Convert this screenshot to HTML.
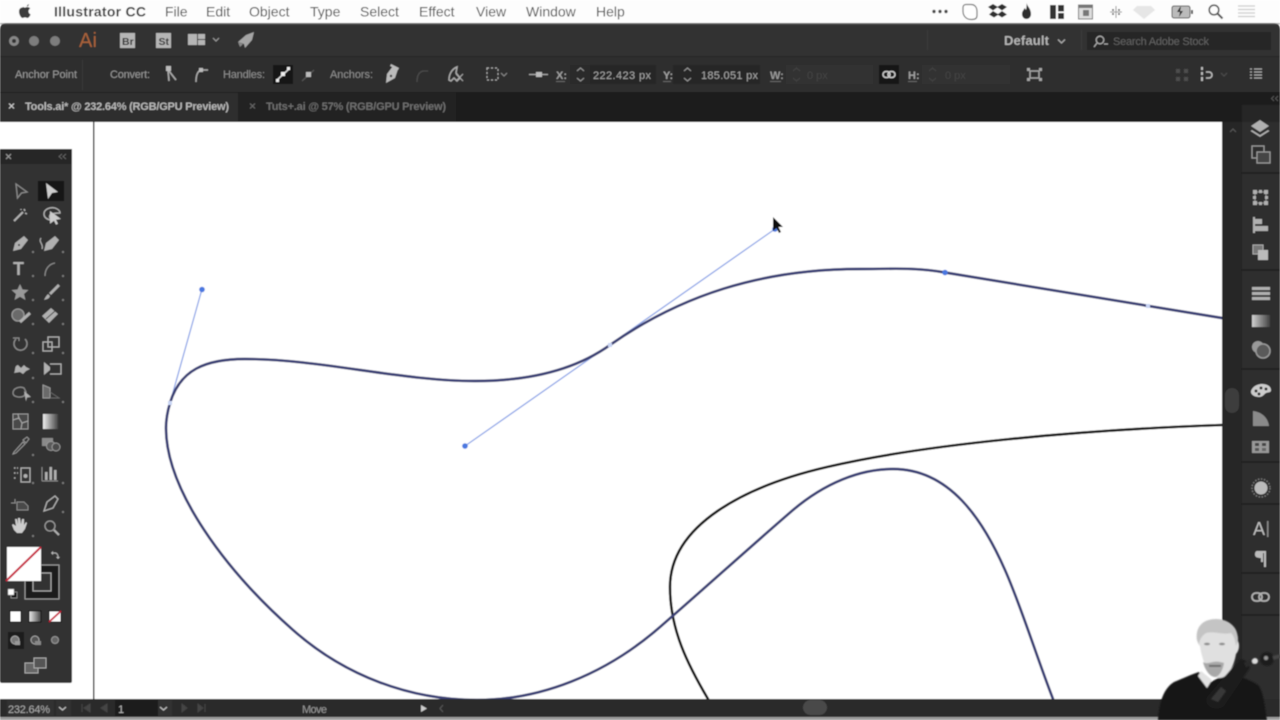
<!DOCTYPE html>
<html><head><meta charset="utf-8"><title>Illustrator CC</title>
<style>
html,body{margin:0;padding:0;background:#fff;width:1280px;height:720px;overflow:hidden}
svg{display:block;position:absolute;left:0;top:0}
text{font-family:"Liberation Sans",sans-serif}
</style></head><body>
<svg width="1280" height="720" viewBox="0 0 1280 720" xmlns="http://www.w3.org/2000/svg">
<defs>
<linearGradient id="g" x1="0" x2="1"><stop offset="0" stop-color="#eee"/><stop offset="1" stop-color="#444"/></linearGradient>
<filter id="b" x="-5%" y="-5%" width="110%" height="110%"><feGaussianBlur stdDeviation="0.6"/></filter>
<filter id="b2" x="-20%" y="-20%" width="140%" height="140%"><feGaussianBlur stdDeviation="0.9"/></filter>
</defs>
<g filter="url(#b)">
<!-- menu bar -->
<rect width="1280" height="24" fill="#fdfdfd"/>
<path d="M27 6.500c.8-.1 1.800-.9 2-2.300-1.200.1-2.300 1.100-2 2.300zM22.500 7.500c-2 0-3.500 1.600-3.500 4 0 3 2 6.500 3.600 6.500.9 0 1.300-.6 2.400-.6s1.500.6 2.400.6c1.400 0 2.600-2 3.200-3.600-2.600-1-2.800-4.800-.3-5.900-.8-1-2-1.500-3-1.500-1 0-1.700.6-2.300.6-.7 0-1.500-.6-2.500-.6z" fill="#3a3a3a"/>
<text x="54" y="16.500" font-size="14" font-weight="700" fill="#3c3c3c" textLength="92">Illustrator CC</text>
<g font-size="14" fill="#505050">
<text x="165" y="16.500">File</text><text x="206" y="16.500">Edit</text><text x="249" y="16.500">Object</text><text x="310" y="16.500">Type</text><text x="360" y="16.500">Select</text><text x="419" y="16.500">Effect</text><text x="476" y="16.500">View</text><text x="526" y="16.500">Window</text><text x="596" y="16.500">Help</text>
</g>
<!-- status icons -->
<g fill="#444">
<circle cx="934" cy="11.500" r="1.700"/><circle cx="940" cy="11.500" r="1.700"/><circle cx="946" cy="11.500" r="1.700"/>
<path d="M966 4.500h5c4 0 6 3 6 7v4c0 3-2 4-5 4h-1c-5 0-8-4-8-8v-4c0-2 1.500-3 3-3z" fill="#fff" stroke="#777" stroke-width="1.200"/>
<path d="M993 4l5 3-5 3.500-5-3.500zM1002 4l5 3-5 3.500-5-3.500zM993 11l5 3 4-3 5 3.500-5 3-4-2.500-4 2.500-5-3z" fill="#2e2e2e"/>
<path d="M1026.500 3c.5 3 4.500 5.500 4.500 11 0 3-2 5-4.500 5s-4.500-2-4.500-5c0-3 2-4 2.500-6 1 1 1.500 2 1.500 2 .6-2 .5-4.500.5-7z" fill="#2e2e2e"/>
<rect x="1050" y="5" width="6" height="14" fill="#333"/><rect x="1058" y="5" width="6" height="6.500" fill="#333"/><rect x="1058" y="13" width="6" height="6" fill="#333"/>
<rect x="1078.500" y="5" width="14" height="14" fill="#ddd" stroke="#777"/><rect x="1078.500" y="5" width="14" height="3" fill="#777"/><rect x="1083" y="10" width="6" height="6" fill="#777"/>
<path d="M1116 6v12M1110 12h12" stroke="#999" stroke-width="1" fill="none"/><circle cx="1113" cy="10" r="1" fill="#555"/><circle cx="1119" cy="10" r="1" fill="#555"/><circle cx="1113" cy="14" r="1" fill="#555"/><circle cx="1119" cy="14" r="1" fill="#555"/>
<path d="M1137 6h14l4 4-11 9-11-9z" fill="#e6e6e6"/>
<rect x="1172" y="6" width="18" height="12" rx="2" fill="#bbb" stroke="#555"/><rect x="1191" y="10" width="2" height="4" fill="#555"/><path d="M1180 7l-3 5h3l-1 5 4-6h-3l1-4z" fill="#222"/>
<circle cx="1214" cy="10" r="4.800" fill="none" stroke="#555" stroke-width="1.600"/><path d="M1217.500 13.500l5 5" stroke="#555" stroke-width="2"/>
<path d="M1238 6h17M1238 9.500h17M1238 13h17M1238 16.500h17" stroke="#ccc" stroke-width="1.300"/>
</g>
<!-- app bar -->
<path d="M0 30q0-7 7-7H1273q7 0 7 7V130H0z" fill="#323232"/>
<rect y="23" width="1280" height="1.500" fill="#777" opacity=".6"/>
<circle cx="14" cy="41" r="5" fill="#888"/><circle cx="14" cy="41" r="2" fill="#333"/><circle cx="34" cy="41" r="5" fill="#7d7d7d"/><circle cx="55" cy="41" r="5" fill="#7d7d7d"/>
<text x="79" y="47" font-size="20" fill="#a8623a" textLength="18">Ai</text>
<rect x="120" y="33" width="15" height="15" fill="#b5b5b5"/><text x="122" y="45" font-size="10.500" font-weight="700" fill="#333">Br</text>
<rect x="156" y="33" width="15" height="15" fill="#b5b5b5"/><text x="158.500" y="45" font-size="10.500" font-weight="700" fill="#333">St</text>
<rect x="188" y="34" width="9" height="11" fill="#b5b5b5"/><rect x="198" y="34" width="7" height="5" fill="#b5b5b5"/><rect x="198" y="40" width="7" height="5" fill="#b5b5b5"/>
<path d="M213 38l3 3 3-3" stroke="#999" stroke-width="1.200" fill="none"/>
<path d="M254 32l-2 8-7 8-1-4-6-2 8-7z" fill="#a5a5a5"/><path d="M238 42l5 2-3 3z" fill="#888"/>
<rect x="927" y="30" width="1" height="20" fill="#3d3d3d"/><rect x="1081" y="30" width="1" height="20" fill="#3d3d3d"/>
<text x="1004" y="45" font-size="13" font-weight="700" fill="#b5b5b5" textLength="45">Default</text>
<path d="M1058 39.500l3.500 3.500 3.500-3.500" stroke="#aaa" stroke-width="1.300" fill="none"/>
<rect x="1087" y="32" width="184" height="18" fill="#252525"/>
<circle cx="1100" cy="40" r="3.800" fill="none" stroke="#aaa" stroke-width="1.300"/><path d="M1097 43l-3 4M1104 44l4 0" stroke="#aaa" stroke-width="1.300"/>
<text x="1113" y="45" font-size="11" fill="#636363" textLength="96">Search Adobe Stock</text>
<!-- control bar -->
<rect y="57" width="1280" height="35" fill="#2e2e2e"/>
<rect y="56" width="1280" height="1" fill="#262626"/>
<rect x="82" y="60" width="1" height="30" fill="#383838"/>
<g font-size="11" fill="#9a9a9a">
<text x="15" y="78" textLength="62">Anchor Point</text>
<text x="110" y="78" textLength="40">Convert:</text>
<text x="223" y="78" textLength="42" fill="#8e8e8e">Handles:</text>
<text x="330" y="78" textLength="43" fill="#8e8e8e">Anchors:</text>
</g>
<path d="M168 70l1 11M169 71l7 9" stroke="#aaa" stroke-width="1.600" fill="none"/><rect x="166" y="66" width="5" height="5" fill="#bbb"/>
<path d="M196 82c0-7 2-11 5-12h7" stroke="#aaa" stroke-width="1.500" fill="none"/><rect x="199" y="68" width="4" height="4" fill="#bbb"/>
<rect x="273" y="65" width="20" height="19" fill="#171717"/>
<path d="M277 80l12-11" stroke="#ddd" stroke-width="1.500"/><rect x="281" y="72" width="4" height="4" fill="#eee"/><rect x="276" y="79" width="3" height="3" fill="#eee"/><rect x="287" y="67" width="3" height="3" fill="#eee"/>
<path d="M302 81l12-11" stroke="#555" stroke-width="1.200"/><rect x="306" y="72" width="5" height="5" fill="#bbb"/>
<path d="M393 66l5 3-3 9-9 5 1-9zM391 64l8 4-1 2-8-4z" fill="#bbb"/><circle cx="391" cy="76" r="1.200" fill="#333"/>
<path d="M417 82c0-6 2-10 6-11h5" stroke="#4c4c4c" stroke-width="1.300" fill="none"/>
<path d="M449 80c0-6 3-11 8-13l-1 6 4 5-3 3-3-3-3 3z" fill="none" stroke="#aaa" stroke-width="1.500"/><path d="M456 74l7 7M463 74l-7 7" stroke="#aaa" stroke-width="1"/>
<rect x="487" y="68" width="11" height="12" fill="none" stroke="#aaa" stroke-width="1.200" stroke-dasharray="2 2"/>
<path d="M501 73l3 3 3-3" stroke="#888" stroke-width="1.100" fill="none"/>
<path d="M529 74.500h19" stroke="#aaa" stroke-width="1.300"/><rect x="536" y="72" width="6" height="5" fill="#bbb"/>
<text x="556" y="79" font-size="11" font-weight="700" fill="#a0a0a0">X:</text><rect x="556" y="81" width="9" height="1" fill="#666"/>
<rect x="570" y="65" width="86" height="19" fill="#262626"/><rect x="570" y="65" width="20" height="19" fill="#2a2a2a"/>
<path d="M577 71l3.500-3 3.500 3M577 78l3.500 3 3.500-3" stroke="#999" stroke-width="1.100" fill="none"/>
<text x="593" y="79" font-size="11" fill="#a8a8a8" textLength="58">222.423 px</text>
<text x="663" y="79" font-size="11" font-weight="700" fill="#a0a0a0">Y:</text><rect x="663" y="81" width="8" height="1" fill="#666"/>
<rect x="673" y="65" width="87" height="19" fill="#262626"/>
<path d="M684 71l3.500-3 3.500 3M684 78l3.500 3 3.500-3" stroke="#999" stroke-width="1.100" fill="none"/>
<text x="701" y="79" font-size="11" fill="#a8a8a8" textLength="57">185.051 px</text>
<text x="770" y="79" font-size="11" font-weight="700" fill="#9a9a9a">W:</text><rect x="770" y="81" width="11" height="1" fill="#666"/>
<rect x="786" y="65" width="87" height="19" fill="#333"/>
<path d="M793 71l3.500-3 3.500 3M793 78l3.500 3 3.500-3" stroke="#444" stroke-width="1.100" fill="none"/>
<text x="807" y="79" font-size="11" fill="#444">0 px</text>
<rect x="879" y="65" width="20" height="19" fill="#191919"/>
<rect x="883" y="71.500" width="7" height="6" rx="3" fill="none" stroke="#ccc" stroke-width="1.500"/><rect x="888" y="71.500" width="7" height="6" rx="3" fill="none" stroke="#ccc" stroke-width="1.500"/>
<text x="908" y="79" font-size="11" font-weight="700" fill="#a0a0a0">H:</text><rect x="908" y="81" width="9" height="1" fill="#666"/>
<rect x="922" y="65" width="88" height="19" fill="#333"/>
<path d="M929 71l3.500-3 3.500 3M929 78l3.500 3 3.500-3" stroke="#444" stroke-width="1.100" fill="none"/>
<text x="945" y="79" font-size="11" fill="#444">0 px</text>
<g fill="#a5a5a5"><rect x="1027" y="68" width="3" height="3"/><rect x="1039" y="68" width="3" height="3"/><rect x="1027" y="78" width="3" height="3"/><rect x="1039" y="78" width="3" height="3"/></g>
<rect x="1030" y="71" width="9" height="7" fill="none" stroke="#a5a5a5" stroke-width="1.500"/>
<g fill="#4e4e4e"><rect x="1176" y="69" width="4" height="4"/><rect x="1184" y="69" width="4" height="4"/><rect x="1176" y="77" width="4" height="4"/><rect x="1184" y="77" width="4" height="4"/></g>
<path d="M1202 67v3M1202 72v3M1202 77v4" stroke="#bbb" stroke-width="2"/><path d="M1206 72h3a3 3 0 0 1 0 6h-3" stroke="#bbb" stroke-width="1.500" fill="none"/>
<path d="M1221 73l3 3 3-3" stroke="#4e4e4e" stroke-width="1.100" fill="none"/>
<path d="M1254 69h8M1254 72h8M1254 75h8M1254 78h8M1250 69h2M1250 72h2M1250 75h2M1250 78h2" stroke="#aaa" stroke-width="1.200"/>
<!-- tabs -->
<rect y="92" width="1280" height="30" fill="#1e1e1e"/>
<rect y="93" width="238" height="29" fill="#2e2e2e"/>
<rect x="238" y="93" width="218" height="29" fill="#232323"/>
<path d="M9 103.500l5 5M14 103.500l-5 5" stroke="#ccc" stroke-width="1.200"/>
<text x="25" y="110" font-size="11" font-weight="700" fill="#b8b8b8" textLength="204">Tools.ai* @ 232.64% (RGB/GPU Preview)</text>
<path d="M250 103.500l5 5M255 103.500l-5 5" stroke="#666" stroke-width="1.200"/>
<text x="266" y="110" font-size="11" font-weight="700" fill="#6e6e6e" textLength="180">Tuts+.ai @ 57% (RGB/GPU Preview)</text>
<!-- canvas -->
<rect x="0" y="122" width="1222" height="577" fill="#fff"/>
<rect x="93" y="122" width="1.500" height="577" fill="#333"/>
<!-- artwork -->
<g fill="none" stroke-linecap="round">
<path d="M170 403L202 289M465 446L775 229M945 272.500L1148 306" stroke="#8ea6e8" stroke-width="1.300"/>
<path d="M1222 425C1080 430 925 444 827 467C745 486 670 525 670 587C670 630 688 665 708 699" stroke="#161616" stroke-width="2.600"/>
<path d="M1222 318L945 272.500C915 267 890 269 860 269C760 269 680 296 610 345C575 370 530 381 475 381C400 381 320 359 245 359C205 359 180 370 170 403C167 413 166 420 166 428C166 490 225 570 293 630C345 676 410 700 477 700C540 700 605 675 660 627C705 588 750 547 793 510C825 483 860 469 893 469C950 469 983 520 1005 570C1021 606 1037 658 1053 699" stroke="#3b4174" stroke-width="2.700"/>
</g>
<g fill="#4a78e0"><circle cx="202" cy="289.500" r="2.800"/><circle cx="465" cy="446" r="2.800"/><circle cx="775" cy="229" r="2.800"/><circle cx="945" cy="272.500" r="2.800"/></g>
<g fill="#c8d4f4"><rect x="168" y="401" width="4" height="4"/><rect x="608" y="343" width="4" height="4"/><rect x="1146" y="304" width="4" height="4"/></g>
<path d="M773 217v14l3.500-3 2.500 5 2-1-2.500-5h4.500z" fill="#111"/>
<!-- tools panel -->
<rect x="0" y="149" width="72" height="534" rx="2" fill="#303030"/>
<rect x="0" y="149" width="72" height="15" fill="#252525"/>
<path d="M6 154l5 5M11 154l-5 5" stroke="#999" stroke-width="1.200"/>
<path d="M62 154l-3 2.500 3 2.500M66 154l-3 2.500 3 2.500" stroke="#666" stroke-width="1" fill="none"/>
<rect x="38" y="181" width="26" height="20" fill="#181818"/>
<g fill="#b0b0b0" stroke="#b0b0b0">
<path d="M16 184l11 8-5.500 1-4 5z" fill="none" stroke="#8a8a8a" stroke-width="1.300"/>
<path d="M46 183l12 9-6 1-4 6z" stroke="none" fill="#ccc"/>
<path d="M14 221l9-9" stroke-width="2"/><path d="M24 209l1 2M27 214l-2-1M21 209l0 1" stroke-width="1.500"/>
<path d="M44 214c0-5 6-7 11-6 3 1 5 3 5 5-3 0-7 0-10 2-1 2 0 4 2 5-4 0-8-2-8-6z" fill="none" stroke-width="1.400"/><path d="M50 211l11 8-5 .8 2 4-2 1-2-4-4 3z" stroke="none" fill="#ccc"/>
<path d="M13 251l2-8 9-7 4 4-7 9z" stroke="none"/><circle cx="19" cy="245" r="1" fill="#333" stroke="none"/>
<path d="M44 251l2-8 9-7 4 4-7 9z" stroke="none"/><path d="M41 238c-3 4 3 6 1 11" fill="none" stroke-width="1.200"/>
<text x="13" y="275" font-size="18" font-weight="700" stroke="none" font-family="Liberation Serif">T</text>
<path d="M45 276c0-7 4-12 10-13" fill="none" stroke="#8a8a8a" stroke-width="1.300"/>
<path d="M20 284l2.500 5.500 6 .5-4.500 4 1.500 6-5.500-3.200-5.500 3.200 1.500-6-4.500-4 6-.5z" stroke="none" fill="#999"/>
<path d="M58 284l2 2-9 9-2-2zM48 294l2 2c-1 3-3 3-6 4 1-2 2-4 4-6z" stroke="none"/>
<circle cx="18" cy="315" r="6" fill="#6a6a6a" stroke="#999" stroke-width="1.300"/><path d="M20 322l10-9" stroke-width="3"/>
<path d="M42 316l9-8 7 6-9 9z" stroke="none"/><path d="M46 319l9-8" stroke="#444" stroke-width="1"/>
<path d="M25 339a6.500 6.500 0 1 1-9 0" fill="none" stroke="#8a8a8a" stroke-width="1.500"/><path d="M13 338h6v3" fill="none" stroke="#8a8a8a" stroke-width="1.200"/>
<rect x="43" y="342" width="9" height="9" fill="none" stroke-width="1.300"/><rect x="48" y="337" width="11" height="10" fill="none" stroke-width="1.300"/>
<path d="M14 373c2-3 0-7 4-8l3 3 3-3 2 2 4 2-4 2-3 3-3-2z" stroke="none"/>
<path d="M50 364h11v10H50" fill="none" stroke-width="1.300"/><path d="M44 362l6 5v3l-6 5z" stroke="none"/>
<path d="M13 393c0-5 7-7 11-5l2 4-2 4c-4 2-11 1-11-3z" fill="none" stroke="#8a8a8a" stroke-width="1.300"/><path d="M24 391l7 6-4 .5-1 4z" stroke="none"/>
<path d="M43 385l7 3v10h-7z" fill="#6a6a6a" stroke="#999" stroke-width="1"/><path d="M50 398h9l-9-6" fill="none" stroke="#666" stroke-width="1"/>
<rect x="13" y="414" width="15" height="15" fill="#4a4a4a" stroke="#999" stroke-width="1"/><path d="M13 420l6-2 3 5 6-2M18 414l1 5M22 423l-1 6" fill="none" stroke="#aaa" stroke-width="1"/>
<rect x="43" y="414" width="15" height="15" fill="url(#g)" stroke="none"/>
<path d="M14 452l-1 2 3-1 9-9-2-2zM23 440l4-3 2 2-3 4z" stroke="#999" stroke-width="1" fill="none"/>
<rect x="42" y="438" width="11" height="8" stroke="none" fill="#8a8a8a"/><circle cx="51" cy="446" r="4.500" fill="#5a5a5a" stroke="#999"/><circle cx="56" cy="447" r="4" fill="#4c4c4c" stroke="#999"/>
<rect x="21" y="468" width="9" height="14" fill="none" stroke-width="1.300"/><circle cx="25.500" cy="476" r="2" stroke="none"/><path d="M14 468h4M14 473h4M14 478h2" stroke-width="1.500" stroke-dasharray="1.500 1.500"/>
<path d="M42 481v-14M42 481h16" fill="none" stroke="#8a8a8a" stroke-width="1"/><rect x="45" y="472" width="2.500" height="8" stroke="none"/><rect x="49.500" y="467" width="2.500" height="13" stroke="none"/><rect x="54" y="470" width="2.500" height="10" stroke="none"/>
<path d="M11 503h5M15 499v4" fill="none" stroke="#8a8a8a" stroke-width="1"/><path d="M17 502h7l4 4v4H17z" fill="#4a4a4a" stroke="#8a8a8a"/>
<path d="M44 511l3-9 8-6 3 3-5 9z" fill="none" stroke-width="1.300"/>
<path d="M14 530l-2-5 1-1 3 2-1-7h2l1 5v-6h2l1 6 1-5h2l0 6 2-3 1 1-2 6-3 4h-5z" stroke="none" fill="#ccc"/>
<circle cx="50" cy="526" r="5" fill="none" stroke="#999" stroke-width="1.300"/><path d="M54 530l5 5" stroke-width="2"/>
</g>
<g fill="#777"><rect x="32" y="251" width="2" height="2"/><rect x="62" y="251" width="2" height="2"/><rect x="32" y="275" width="2" height="2"/><rect x="62" y="275" width="2" height="2"/><rect x="32" y="299" width="2" height="2"/><rect x="62" y="299" width="2" height="2"/><rect x="32" y="323" width="2" height="2"/><rect x="62" y="323" width="2" height="2"/><rect x="32" y="352" width="2" height="2"/><rect x="62" y="352" width="2" height="2"/><rect x="32" y="377" width="2" height="2"/><rect x="32" y="401" width="2" height="2"/><rect x="62" y="401" width="2" height="2"/><rect x="32" y="454" width="2" height="2"/><rect x="32" y="482" width="2" height="2"/><rect x="62" y="482" width="2" height="2"/><rect x="62" y="511" width="2" height="2"/><rect x="32" y="535" width="2" height="2"/></g>
<!-- fill/stroke -->
<rect x="25" y="565" width="34" height="34" fill="#1a1a1a" stroke="#999" stroke-width="1.200"/>
<rect x="33" y="573" width="18" height="18" fill="#333" stroke="#aaa" stroke-width="1.200"/>
<rect x="7" y="547" width="34" height="34" fill="#fff"/>
<path d="M6 581l35-34" stroke="#c8203a" stroke-width="2"/>
<path d="M52 553h3c2 0 3 2 3 4" stroke="#aaa" stroke-width="1.200" fill="none"/><path d="M51 553l2-2v4zM58 559l-2-2h4z" fill="#bbb"/>
<rect x="11" y="592" width="6" height="6" fill="#111" stroke="#999" stroke-width=".8"/><rect x="8" y="589" width="6" height="6" fill="#fff" stroke="#999" stroke-width=".5"/>
<rect x="10" y="611" width="11" height="11" fill="#fff" stroke="#111"/>
<rect x="29" y="611" width="12" height="11" fill="url(#g)" stroke="#111"/>
<rect x="49" y="611" width="12" height="11" fill="#fff" stroke="#111"/><path d="M49 622l12-11" stroke="#c8203a" stroke-width="1.800"/>
<rect x="8" y="632" width="16" height="17" fill="#1c1c1c"/>
<circle cx="15" cy="640" r="4" fill="#777" stroke="#aaa"/><rect x="15" y="641" width="5" height="4" fill="#999"/>
<circle cx="35" cy="640" r="4" fill="#555" stroke="#aaa"/><rect x="35" y="641" width="6" height="4" fill="#888"/>
<circle cx="55" cy="640" r="3.500" fill="#666" stroke="#999"/>
<rect x="25" y="663" width="13" height="10" fill="#666" stroke="#aaa"/><rect x="34" y="658" width="12" height="10" fill="#555" stroke="#aaa"/>
<!-- right dock -->
<rect x="1222" y="122" width="58" height="577" fill="#262626"/>
<rect x="1242" y="105" width="38" height="17" fill="#272727"/>
<rect x="1242" y="122" width="38" height="577" fill="#2f2f2f"/>
<rect x="1241" y="122" width="1" height="577" fill="#222"/>
<path d="M1230 132l3-3 3 3" stroke="#555" stroke-width="1.200" fill="none"/>
<path d="M1274 96l-2.500 2.500 2.500 2.500M1278 96l-2.500 2.500 2.500 2.500" stroke="#555" stroke-width="1" fill="none"/>
<rect x="1225" y="388" width="14" height="25" rx="7" fill="#3d3d3d"/>
<g fill="#242424"><rect x="1242" y="172" width="38" height="2"/><rect x="1242" y="269" width="38" height="2"/><rect x="1242" y="368" width="38" height="2"/><rect x="1242" y="461" width="38" height="2"/><rect x="1242" y="503" width="38" height="2"/><rect x="1242" y="572" width="38" height="2"/><rect x="1242" y="614" width="38" height="2"/></g>
<g fill="#b0b0b0">
<path d="M1260 120l9 6-9 6-9-6z"/><path d="M1252 130l8 5 8-5 1.500 1-9.500 6-9.500-6z"/>
<rect x="1252" y="146" width="12" height="12" fill="none" stroke="#999" stroke-width="1.300"/><rect x="1257" y="152" width="13" height="11" fill="#444" stroke="#999" stroke-width="1.300"/>
<rect x="1255" y="192" width="11" height="11" fill="none" stroke="#888"/><rect x="1253" y="190" width="4" height="4"/><rect x="1259" y="190" width="3" height="3"/><rect x="1264" y="190" width="4" height="4"/><rect x="1253" y="196" width="3" height="3"/><rect x="1265" y="196" width="3" height="3"/><rect x="1253" y="201" width="4" height="4"/><rect x="1259" y="202" width="3" height="3"/><rect x="1264" y="201" width="4" height="4"/>
<rect x="1253" y="217" width="2" height="16"/><rect x="1255" y="219" width="7" height="5"/><rect x="1255" y="226" width="13" height="5"/>
<rect x="1253" y="245" width="10" height="9" fill="#777" stroke="#aaa"/><rect x="1258" y="250" width="10" height="10" fill="#bbb"/>
<rect x="1252" y="287" width="18" height="3"/><rect x="1252" y="292" width="18" height="3"/><rect x="1252" y="297" width="18" height="3"/>
<rect x="1252" y="315" width="18" height="12" fill="url(#g)" opacity=".85"/>
<circle cx="1258" cy="347" r="6" fill="#999"/><circle cx="1263" cy="351" r="7" fill="#5a5a5a" stroke="#999" stroke-width="1.500"/>
<path d="M1262 384c6 0 9 3 9 6s-3 2-5 3-3 4-7 4-8-2-8-5 4-8 11-8z" fill="#ccc"/><circle cx="1256" cy="391" r="1.500" fill="#333"/><circle cx="1261" cy="388" r="1.500" fill="#333"/><circle cx="1266" cy="389" r="1.500" fill="#333"/><circle cx="1259" cy="394" r="1.500" fill="#333"/>
<path d="M1253 411c9 1 15 7 16 15h-16z" fill="#8a8a8a"/>
<rect x="1252" y="441" width="17" height="12" fill="#999"/><rect x="1255" y="443" width="4" height="3" fill="#444"/><rect x="1262" y="443" width="4" height="3" fill="#444"/><rect x="1255" y="448" width="4" height="3" fill="#555"/><rect x="1262" y="448" width="4" height="3" fill="#666"/>
<circle cx="1261" cy="488" r="6.500" fill="#bbb"/><circle cx="1261" cy="488" r="9" fill="none" stroke="#777" stroke-width="1.500" stroke-dasharray="1.500 1.500"/>
<text x="1253" y="535" font-size="18" fill="#bbb">A</text><rect x="1267" y="521" width="1.500" height="16" fill="#888"/>
<path d="M1257 551h9v16h-2v-14h-1v9h-2v-4c-4 0-6-1-6-3.500s1-3.500 2-3.500z" fill="#bbb"/>
<rect x="1252" y="593" width="10" height="8" rx="4" fill="none" stroke="#b0b0b0" stroke-width="1.800"/><rect x="1259" y="593" width="10" height="8" rx="4" fill="none" stroke="#b0b0b0" stroke-width="1.800"/>
</g>
<!-- status bar -->
<rect y="699" width="1280" height="18" fill="#2a2a2a"/>
<rect y="717" width="1280" height="3" fill="#9c9c9c"/>
<rect x="7" y="700" width="47" height="16" fill="#333"/>
<text x="8" y="713" font-size="11" fill="#aaa" textLength="42">232.64%</text>
<rect x="56" y="700" width="15" height="16" fill="#333"/><path d="M59 707l3.500 3 3.500-3" stroke="#bbb" stroke-width="1.300" fill="none"/>
<path d="M82 704v8M90 704l-6 4 6 4zM107 704l-6 4 6 4z" fill="#444" stroke="#444"/>
<rect x="115" y="700" width="43" height="16" fill="#1e1e1e"/>
<text x="118" y="713" font-size="11" fill="#bbb">1</text>
<rect x="158" y="700" width="14" height="16" fill="#333"/><path d="M160 707l3.500 3 3.500-3" stroke="#bbb" stroke-width="1.300" fill="none"/>
<path d="M182 704l5 4-5 4zM198 704l5 4-5 4zM205 704v8" fill="#444" stroke="#444"/>
<text x="302" y="713" font-size="11" fill="#999" textLength="25">Move</text>
<path d="M421 705l6 3.500-6 3.500z" fill="#ccc"/><path d="M443 705l-3 3.500 3 3.500" stroke="#555" stroke-width="1.200" fill="none"/>
<rect x="803" y="700" width="24" height="15" rx="7.500" fill="#484848"/>
</g>
<!-- webcam person -->
<g filter="url(#b2)">
<path d="M1158 720c1-18 6-32 16-38 10-4 18-8 25-10l12 10 18-10c10 5 24 8 30 14 5 8 6 22 8 34z" fill="#131313"/>
<path d="M1198 676l3-5 11 9-5 8z" fill="#e2e2e2"/>
<path d="M1197 634c-1 3 0 10 3 12 2 14 8 30 18 32 10 1 16-12 18-24 3-3 4-9 2-13 0-13-6-20-20-20-12 0-20 5-21 13z" fill="#e0e0e0"/>
<path d="M1197 640c-2-14 7-21 19-21 13 0 22 8 22 22l-2 5c-1-7-2-10-5-13-8 2-17-2-25 0-3 2-6 5-7 11z" fill="#c4c4c4"/>
<path d="M1203 662c3 2 6 1 10 0s8 0 11 1c-1 7-5 14-9 14-5 0-10-7-12-15z" fill="#a8a8a8"/>
<ellipse cx="1207" cy="644" rx="3" ry="1.300" fill="#888"/><ellipse cx="1222" cy="644" rx="3" ry="1.300" fill="#888"/>
<rect x="1209" y="665" width="12" height="1.800" fill="#666"/>
<path d="M1207 697l32-37c4-3 11 3 11 8l-26 38c-4 4-13 3-16-1-2-2-2-6-1-8z" fill="#1f1f1f"/>
<path d="M1211 699l10-12 5 4-8 11z" fill="#383838"/>
<path d="M1245 665l12-5" stroke="#2a2a2a" stroke-width="5"/>
<circle cx="1255" cy="661" r="3" fill="#ddd"/><circle cx="1267" cy="659" r="7" fill="#1c1c1c"/><circle cx="1266" cy="658" r="2" fill="#999"/>
<path d="M1273 658l7-2" stroke="#444" stroke-width="4"/>
</g>
</svg>
</body></html>
